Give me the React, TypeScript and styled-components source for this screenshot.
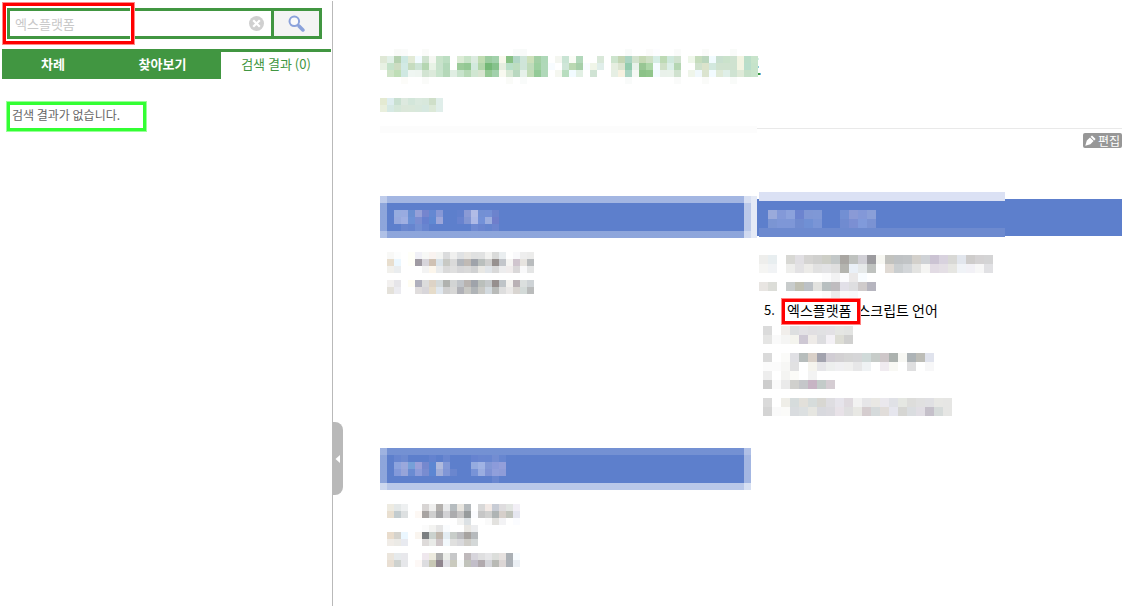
import React, { useState } from "react";
import styled, { createGlobalStyle } from "styled-components";

const green = "#419641";
const blue = "#5d7fcc";
const grey = "#b9b9b9";

const GlobalStyle = createGlobalStyle`
  * { box-sizing: border-box; }
  body {
    margin: 0;
    background: #fff;
    color: #111;
    font: 14px/24px "Noto Sans CJK KR", "Noto Sans", sans-serif;
  }
  button, input { font: inherit; }
`;

/* ---------- redacted text, drawn as a grid of coloured cells ---------- */

const MosaicSvg = styled.svg`
  display: block;
  flex: none;
`;

type MosaicProps = { rows: string[]; cell?: number };

/* Each row lists its cells as hex colours; "." is an empty cell and "-N" skips N cells. */
function Mosaic({ rows, cell = 7 }: MosaicProps) {
  let columns = 0;
  const cells: React.ReactNode[] = [];
  rows.forEach((row, y) => {
    let x = 0;
    row.split(" ").forEach((c) => {
      if (c[0] === "-") {
        x += Number(c.slice(1));
        return;
      }
      if (c !== ".") {
        cells.push(
          <rect key={`${x}-${y}`} x={x * cell} y={y * cell} width={cell} height={cell} fill={`#${c}`} />
        );
      }
      x += 1;
    });
    columns = Math.max(columns, x);
  });
  return (
    <MosaicSvg width={columns * cell} height={rows.length * cell} shapeRendering="crispEdges" aria-hidden="true">
      {cells}
    </MosaicSvg>
  );
}

const titleCells = [
  "-2 f9faf8 fafbfa -2 fafbf9 -12 f9fbfa f8faf9 -14 f9fbfa -2 fbfbfa fdfdff -2 fafbfa -3 fafbf9 -3 f9fbf9",
  "dfe8d6 e2f0e8 b5d1b0 cde8e2 e2ead6 f2fbff cfe2cf f5f7f2 c8e3ca bcdec2 . dcecd6 c8e4c8 dcebe0 c0dcb2 9bcc9f a2d1ab f8f8ec 87c184 b2d6c6 cfe5d9 cde0ba a2cfa4 aed8b8 . f4f6f0 c9e4d4 fafcf6 b2d8bb . . d9e8d9 . cde4cd c3d5b3 aad4c2 d2e2cd c5d9b5 cfe0c6 d6ede5 bddab5 cfe8dc d0e2cf . eff7ea c5dcbc bad6bd f2fbff c8dfcf cae2cb cfe2d0 f2f4e2 badec8 c8e4cb",
  "e8f1e4 c5e2ca cddcc2 d2eae5 c6dcbf cde4d6 b5d6b2 e8f3e6 c8e2cc b2d8b9 . 9bcb99 93c893 d2e9dd b2d6aa 74b876 86c28c e6eee0 b9dfc8 bdddc0 cfe5d8 c0dcbb 9ccf9f b0d8b9 f8fcff . cfe6d8 bad8b2 a6cfa9 f8fcff f0f5e8 e0eeea . e6eee0 dbe4d0 93cbae e9f2ea 98c694 add6a8 f5fbff cfe0c8 dcefe8 b5d6b3 . . cfe1cc dbe3cb d2e8de cfe2cf cfe2cf cfe2d0 f2f4e2 b9decb c6e3ca",
  ". cfe4c8 bfdeb7 cfe8e2 eff6f2 eef5f0 d2e4d2 dceadb c8e4cc b5d8b9 e0eee3 c8e3cc b6d9b6 d0e6d2 d8e4d0 93c893 a2d0ac f8f9f0 d8e8d5 b9d8c0 e6f1ea c2dcb8 93ca97 b0d8b9 . f5f7f0 b8ddbf f2fbff e2f0e4 . d0e3d4 . . e6efe4 f7f1e0 aad4c2 f5f8f4 8cc288 90c58b f2fbff e9f1ea e9f2ea d0e2cf . eff5ea f0f8fc dbe4cf f2fbff dfead8 dfefe8 cfe3d2 dfead8 c5e0c8 c8e4cb",
  "-3 fcfcf9 -2 fafbf9 -11 fafbf8 . f9fbfa -14 f9fbfa -6 fafbfa -3 fafbf9 -3 f9fbf9",
];

const subtitleCells = [
  "e4ead2 deedef c9e0d1 dde9df d3e6da dae9de d8e8dc cfdfc9 e0eeea",
  "e9efdd d6e9e4 d5e7d9 dbe7da dae8da d8e8dc d6e8e0 dce9d8 e0eeea",
];

const firstHeading = [
  "97acdf 99abe0 6a8fd2 95a0d8 7585ce 6488d2 8798d6 . . 6180cd 8a9ad5 b2bce6 7390d4 7490d6 6c83cd",
  "97a9de 9fafe2 6c91d6 7a8dd2 6680cf 5f88d2 9ca6da . . 6883cf 8296d3 adb9e6 7391d8 9baddf 6f7ecb",
  ". 6a87cf 6685cf 738fd3 6885d0 -6 6f8ad2 6a85cf 6584ce 6c85cf",
];

const firstItems = [
  [
    "f8f8f6 fcfdfd . fffff8 f0f0f6 f7f8f6 f9f3f0 f3f4f2 dbdcdd f0f0ef e0e2e4 e8e6e2 e0e1e1 e1e2e2 f2f2f0 dadbda eaeef0 . f9f9fb eeeeee ececeb",
    "e8dece ebf7ff . fffff8 a09ba3 d7d5db cfc1b3 dae3e9 c8c9c4 dadada b3b7bd c0bab5 9fa3aa babfbd cfcfce 97918f c3c6cb f5f4f2 d0c5ce e7e4e0 b9bcbe",
    "f1f0ec eaedef . . . f3f3f3 fcf6ec e9ebec dadada dfdfdf d6d6d8 d9d9d9 d0d1d2 e9e8e4 e1e5e9 d9d9d9 ededee f0ecec dad8d9 f9f9fa e4e5e5",
  ],
  [
    "f2f0ef e6e5e9 . fffdf2 b0b0bc dcdcdc ddd3c6 d3d9da b0b2af d2d4d4 c0c4c9 b8b3b0 9fa3aa babfbb c4c8ca 968f8e bfc4c8 f3f1ee bab1b5 dbdfde ced3d6",
    "e4e1da ebebf0 . . e0dddd d8d6da e6dcca e0e7ee d0d0d0 d7d7d6 b0b1b7 c8c8c4 b0b4b7 c8c8c4 d3dadf b9bbb9 dedede ebe9e8 d9d5d1 d3dad8 babcbc",
  ],
];

const secondHeading = [
  "9aaadb 8399d8 8ca2dc 6c84cf 7f97d5 7f98d6 . . 728fd3 8a9ad6 8398d8 8a9fd8",
  "7b95d3 7e97d7 7e97d7 708bcf 7090d4 7a95d6 . . 708bd0 7b8fd3 809adb 7a92d3",
];

const secondItemsBefore = [
  [
    "eeeeec e8eef0 . d8d8d4 e1dfe3 d5d4d2 d0d0ce cdcec6 c3c8c8 a9a6a2 bfc2bf d1d0d6 9c9b9f f7f7f2 c2c2be bfc2c4 c1c4c6 d3d0cb cfd2d6 cbc3d3 d8d2de d8d8d5 e2e6ed cecccb d4d2d3 d4d4d5",
    "f5f5f3 f1f3f5 . eeeeec e3e2e4 ecebe8 e1e1e1 e3e3e5 dfdfdf b4b4af eaf0f7 e6e9e9 bfc2bf . e0dad4 caced0 d3d6d9 e3e3e1 f5f5f3 e2dbe4 e4dfe5 e6e6e2 f0f3f7 f2f1f6 f7f7f7 e1e1e4",
    "-7 fbfbfc f2f2f3 fbfbfd ebe9e9 f8fcff",
  ],
  [
    "e8e5e2 dcddd8 . c8cccc c0c0b3 bcc1c6 e2e2df b8bfc0 bfbcbf e2e0e8 dedee0 cfcbcb b6b5bf",
    "-7 fbfbfb ececec fafafa f8f9fa",
  ],
];

const secondItemsAfter = [
  [
    "dbdbdb . f1eeeb dddfe0 e3e1e5 e1dfe2 e1e1e3 e3e1e5 e5e6e3 e3e4e2",
    "e5e5e4 fafafa f5f5f4 f4f4ee cec8d4 eeebe8 dddde0 f4f1f6 ddddd5 d0d0cf",
    ".",
  ],
  [
    "dadada . fbfbf9 e0e0e4 b7bdbc d9d0c8 a2a3ae d1cdd4 d3d1d3 d5d5d5 d6d6d8 d0dad9 c7ccc9 cec7c9 acb2af f7f7f3 adb3b6 bdbdb7 e0e3ed",
    "fbfbfb fbfbfb f7f7f5 e1e1e2 . f5f4ee e6e6e9 edefee f0f0f2 f0f0ef e7e7e8 eff2f4 . f0ebf0 f8f8f4 . dfdfe0 . f7f7f8",
  ],
  [
    "ededed . f4f4f2 fbfbf8 . f3f3f3",
    "cdcdcd fafafa eaeaea d0d0cd c5c7ca c7b4c4 c3cbc9 d5cdd3",
    ".",
  ],
  [
    "dadada . efeee8 d6dcdc e2e0da d6dcdb d8d7d2 dedde1 e6e4eb dfdadf f2f2f2 e6e6e8 e9e8e4 eae8ed e0e1e6 e5e7e2 dddddb e0e0e0 e0e0e3 e7e7e4 e6e6e4",
    "d4d4d4 fafafa fbfbf9 d9dcdf dce0e1 e6e6e1 d8d9de dbdadf e8e2e8 dfdfe0 e8e8e4 d5cdcf d5dadb e1ddda e6e6ee d6d6d3 dadde0 e1dee4 c5c0ca d6dbda e6e6e4",
  ],
];

const thirdHeading = [
  "6886d0 6d8ad0 -3 6483cf . 6a87d0 -3 6683d0 6986d0 6886d0 738dd2 6786d0",
  "8ca3de 9aa8dc 76a0d8 9aa0d9 7588ce 5d87d2 b0badd 8399d7 . . . 95abdf a0b3e4 8298d6 8c9bda 939fda",
  "8399da 96a4d9 6a8bd2 8c9cda 788cd0 5d86d2 a1aed9 8096d6 6a86ce . . 7893d7 9aade0 7f93d5 909fdb 8e9cd8",
  "-14 6a87d0",
];

const thirdItems = [
  [
    "eeebe1 e4e8e8 eef0f1 . . d8d5d4 efefee b3b0ad e9eaeb b6bcbf e8e5df b5babd . d8d8d8 f2e9e5 c8ccd5 dedcde e2e5e2 f2eff6",
    "e9dfd0 c3cccf dde0e1 . fdf8f4 a8a4a2 cfcfcf a4a4a6 d2d2d5 acacae c6c5c5 979b9c fbfcff c6c6c6 d0d0cf afb4b4 d6cfca c1c4bc e5e6f0",
    "-10 f2f2f1 dce1e4 . . fafafa e3e2df f3f3f5 . fbfcff",
  ],
  [
    "-5 fbfbfb f3f3f1 e5e5e5 fafcfe . . e9e7e3 ecedef",
    "e9dccc d5d3cd ebf7ff . faf5ef 7c7f81 cbd2ce c0b7ad e3ecf2 c8cdc9 bcbcbf a7a3a0 b6babd",
    "f0ece7 ebeae6 e8eaf0 . . dedbda e9ebe8 cec6c8 f2f8fc e0e0df d9d9dc cfcdc8 d4d8d8",
    ".",
  ],
  [
    "ebe5dc e6eaec e8e8ec . . efe8ee eceade adadad eceeea c7c8c9 . bfb9bb d7d5dc dfdfe0 e6e6e8 dcdedb e6e1df abb0b5 f8fcff",
    "e9dfd3 ced2cf e6e7ea . fdf8f6 dddde0 c8c8b5 8f858e e0e0e5 cacabe f8fafb c1c3bb c2bec9 b1aaae d4d5da b9bab5 dcd6d5 acb1b7 ebeff4",
  ],
];

/* ---------- page frame ---------- */

const Page = styled.div`
  display: flex;
  min-height: 100vh;
  padding: 1px 0;
`;

const Sidebar = styled.aside`
  position: relative;
  flex: 0 0 333px;
  border-right: 1px solid ${grey};
`;

const Main = styled.main`
  flex: 1;
  min-width: 0;
  padding: 48px 21px 36px 47px;
`;

/* ---------- sidebar ---------- */

const SearchForm = styled.form`
  position: relative;
  display: flex;
  height: 31px;
  margin: 7px 10px 10px 7px;
  border: 3px solid ${green};
`;

const SearchInput = styled.input`
  flex: 1;
  min-width: 0;
  padding: 0 5px;
  border: 0;
  outline: 0;
  background: transparent;
  color: #c8c8c8;
  font-size: 13px;
`;

const ClearButton = styled.button`
  display: flex;
  align-items: center;
  padding: 0 7px;
  border: 0;
  background: transparent;
`;

const SearchButton = styled.button`
  display: flex;
  flex: 0 0 48px;
  align-items: center;
  justify-content: center;
  padding: 0;
  border: 0;
  border-left: 3px solid ${green};
  background: #f4f4f4;
`;

const SearchHighlight = styled.span`
  position: absolute;
  top: -8px;
  left: -7px;
  width: 131px;
  height: 41px;
  border: 3px solid #f00;
  box-shadow: 0 0 0 1px #ff8a8a, inset 0 0 0 1px #fff;
  pointer-events: none;
`;

const Tabs = styled.div`
  display: grid;
  grid-template-columns: 102fr 117fr 110fr;
  margin: 0 1px 0 2px;
  border-top: 3px solid ${green};
`;

const Tab = styled.button<{ $active?: boolean }>`
  height: 27px;
  padding: 0;
  border: 0;
  background: ${(p) => (p.$active ? "#fff" : green)};
  color: ${(p) => (p.$active ? green : "#fff")};
  font-size: 13px;
  font-weight: ${(p) => (p.$active ? 400 : 700)};
  line-height: 24px;
  padding-bottom: 3px;
`;

const EmptyMessage = styled.p`
  width: fit-content;
  margin: 23px 0 0 7px;
  padding: 0 23px 4px 2px;
  border: 3px solid #3f3;
  box-shadow: 0 0 0 1px #99ff99;
  color: #666;
  font-size: 12px;
  line-height: 19px;
`;

const CollapseHandle = styled.button`
  position: absolute;
  top: 421px;
  left: 100%;
  display: flex;
  align-items: center;
  justify-content: center;
  width: 11px;
  height: 73px;
  padding: 0;
  border: 0;
  border-radius: 0 8px 8px 0;
  background: ${grey};
`;

/* ---------- document ---------- */

const Title = styled.h1`
  display: flex;
  margin: 0 0 14px;
`;

const Rule = styled.div`
  display: grid;
  grid-template-columns: 377fr 365fr;
  height: 7px;
  margin-top: 14px;
`;

const RuleHaze = styled.span`
  background: #fcfcfc;
`;

const RuleLine = styled.span`
  height: 1px;
  margin-top: 2px;
  background: #e9e9e9;
`;

const EditButton = styled.button`
  display: flex;
  align-items: center;
  gap: 2px;
  height: 15px;
  margin: 0 0 44px auto;
  padding: 0 2px;
  border: 0;
  border-radius: 2px;
  background: #979797;
  color: #fff;
  font-size: 12px;
  line-height: 15px;
`;

const Sections = styled.div`
  display: grid;
  grid-template-columns: 377fr 365fr;
  row-gap: 28px;
`;

const Section = styled.section<{ $top: number }>`
  padding-top: ${(p) => p.$top}px;
`;

const shade = (alpha: number) => `linear-gradient(rgba(255, 255, 255, ${alpha}) 0 0)`;

/* A chapter bar whose edge cells fade towards the page. */
const SoftBar = styled.h2<{ $top: number; $right: number; $bottom: number; $inset: number }>`
  display: flex;
  height: 42px;
  margin: 0 6px 14px 0;
  padding: ${(p) => p.$inset}px 14px 0;
  background:
    ${(p) => shade(p.$top)} top / 100% 7px no-repeat,
    ${(p) => shade(p.$bottom)} bottom / 100% 7px no-repeat,
    ${shade(0.3)} left / 7px 100% no-repeat,
    ${(p) => shade(p.$right)} right / 7px 100% no-repeat,
    ${blue};
`;

const FirstBar = styled(SoftBar)`
  box-shadow: 6px 0 0 #e5eaf6;
`;

const WideBar = styled.h2`
  position: relative;
  display: flex;
  height: 37px;
  margin: 0 0 19px;
  padding: 11px 11px 0;
  background: ${blue};
`;

const BarStrip = styled.span<{ $edge: "top" | "bottom" }>`
  position: absolute;
  left: 2px;
  ${(p) => (p.$edge === "top" ? "top: -7px;" : "bottom: -1px;")}
  width: 246px;
  height: 9px;
  background: ${(p) => (p.$edge === "top" ? "#dbe1f4" : "#6d8acf")};
`;

const ItemList = styled.ol<{ $gap?: number }>`
  display: flex;
  flex-direction: column;
  gap: ${(p) => p.$gap ?? 0}px;
  margin: 0;
  padding: 0 0 0 7px;
  list-style: none;
`;

const WideList = styled(ItemList)`
  padding-left: 2px;
`;

const Item = styled.li<{ $indent?: boolean }>`
  padding-left: ${(p) => (p.$indent ? 4 : 0)}px;
`;

const TextItem = styled.li`
  display: flex;
  height: 26px;
  padding-left: 5px;
  color: #000;
  line-height: 20px;
`;

const ItemNumber = styled.span`
  flex: 0 0 23px;
  font-size: 13px;
`;

const Term = styled.span`
  position: relative;
  margin-right: 6px;

  &::after {
    content: "";
    position: absolute;
    inset: -1px -9px 2px -5px;
    border: 3px solid #f00;
    box-shadow: 0 0 0 1px #ff8080;
  }
`;

function App() {
  const [query, setQuery] = useState("엑스플랫폼");

  return (
    <>
      <GlobalStyle />
      <Page>
        <Sidebar>
          <SearchForm role="search" onSubmit={(e) => e.preventDefault()}>
            <SearchInput aria-label="검색" value={query} onChange={(e) => setQuery(e.target.value)} />
            <ClearButton type="button" aria-label="지우기" onClick={() => setQuery("")}>
              <svg width="15" height="15" viewBox="0 0 15 15" aria-hidden="true">
                <circle cx="7.5" cy="7.5" r="7.5" fill="#d0d0d0" />
                <path d="M4.2 4.2l6.6 6.6M10.8 4.2l-6.6 6.6" stroke="#fff" strokeWidth="2.2" />
              </svg>
            </ClearButton>
            <SearchButton type="submit" aria-label="검색">
              <svg width="17" height="17" viewBox="0 0 17 17" aria-hidden="true">
                <circle cx="6.3" cy="6.3" r="4.8" fill="#fafafa" stroke="#8ba2db" strokeWidth="2" />
                <path d="M9.8 9.8l1.6 1.6" stroke="#8ba2db" strokeWidth="2" />
                <path d="M11.2 11.2l3.7 3.7" stroke="#8ba2db" strokeWidth="3.6" strokeLinecap="round" />
              </svg>
            </SearchButton>
            <SearchHighlight />
          </SearchForm>

          <Tabs role="tablist">
            <Tab type="button" role="tab" aria-selected={false}>차례</Tab>
            <Tab type="button" role="tab" aria-selected={false}>찾아보기</Tab>
            <Tab type="button" role="tab" aria-selected={true} $active>검색 결과 (0)</Tab>
          </Tabs>

          <EmptyMessage>검색 결과가 없습니다.</EmptyMessage>

          <CollapseHandle type="button" aria-label="사이드바 접기">
            <svg width="5" height="8" viewBox="0 0 5 8" aria-hidden="true">
              <path d="M5 0v8L0.5 4z" fill="#fff" />
            </svg>
          </CollapseHandle>
        </Sidebar>

        <Main>
          <Title>
            <Mosaic rows={titleCells} />
            <MosaicSvg width="4" height="35" shapeRendering="crispEdges" aria-hidden="true">
              <rect x="0" y="9" width="1" height="2" fill="#d6f0ea" />
              <rect x="0" y="17" width="1" height="2" fill="#8cc8d8" />
              <rect x="0" y="24" width="2" height="2" fill="#3a9a42" />
              <rect x="2" y="24" width="1" height="2" fill="#6cb8dc" />
            </MosaicSvg>
          </Title>
          <Mosaic rows={subtitleCells} />
          <Rule>
            <RuleHaze />
            <RuleLine />
          </Rule>
          <EditButton type="button">
            <svg width="11" height="11" viewBox="0 0 11 11" aria-hidden="true">
              <path d="M7 0.4L10.6 4 9.2 5.4 5.6 1.8zM5 2.4L8.6 6 5.4 9.2 0.3 10.7 1.8 5.6z" fill="#fff" />
            </svg>
            편집
          </EditButton>

          <Sections>
            <Section $top={4}>
              <FirstBar $top={0.43} $right={0.58} $bottom={0.3} $inset={14}>
                <Mosaic rows={firstHeading} />
              </FirstBar>
              <ItemList $gap={7}>
                {firstItems.map((rows, i) => (
                  <Item key={i}>
                    <Mosaic rows={rows} />
                  </Item>
                ))}
              </ItemList>
            </Section>

            <Section $top={7}>
              <WideBar>
                <BarStrip $edge="top" />
                <BarStrip $edge="bottom" />
                <Mosaic rows={secondHeading} cell={9} />
              </WideBar>
              <WideList>
                {secondItemsBefore.map((rows, i) => (
                  <Item key={i}>
                    <Mosaic rows={rows} cell={9} />
                  </Item>
                ))}
                <TextItem>
                  <ItemNumber>5.</ItemNumber>
                  <Term>엑스플랫폼</Term> 스크립트 언어
                </TextItem>
                {secondItemsAfter.map((rows, i) => (
                  <Item key={i} $indent>
                    <Mosaic rows={rows} cell={9} />
                  </Item>
                ))}
              </WideList>
            </Section>

            <Section $top={4}>
              <SoftBar $top={0.14} $right={0.43} $bottom={0.57} $inset={7}>
                <Mosaic rows={thirdHeading} />
              </SoftBar>
              <ItemList>
                {thirdItems.map((rows, i) => (
                  <Item key={i}>
                    <Mosaic rows={rows} />
                  </Item>
                ))}
              </ItemList>
            </Section>
          </Sections>
        </Main>
      </Page>
    </>
  );
}

export default App;
